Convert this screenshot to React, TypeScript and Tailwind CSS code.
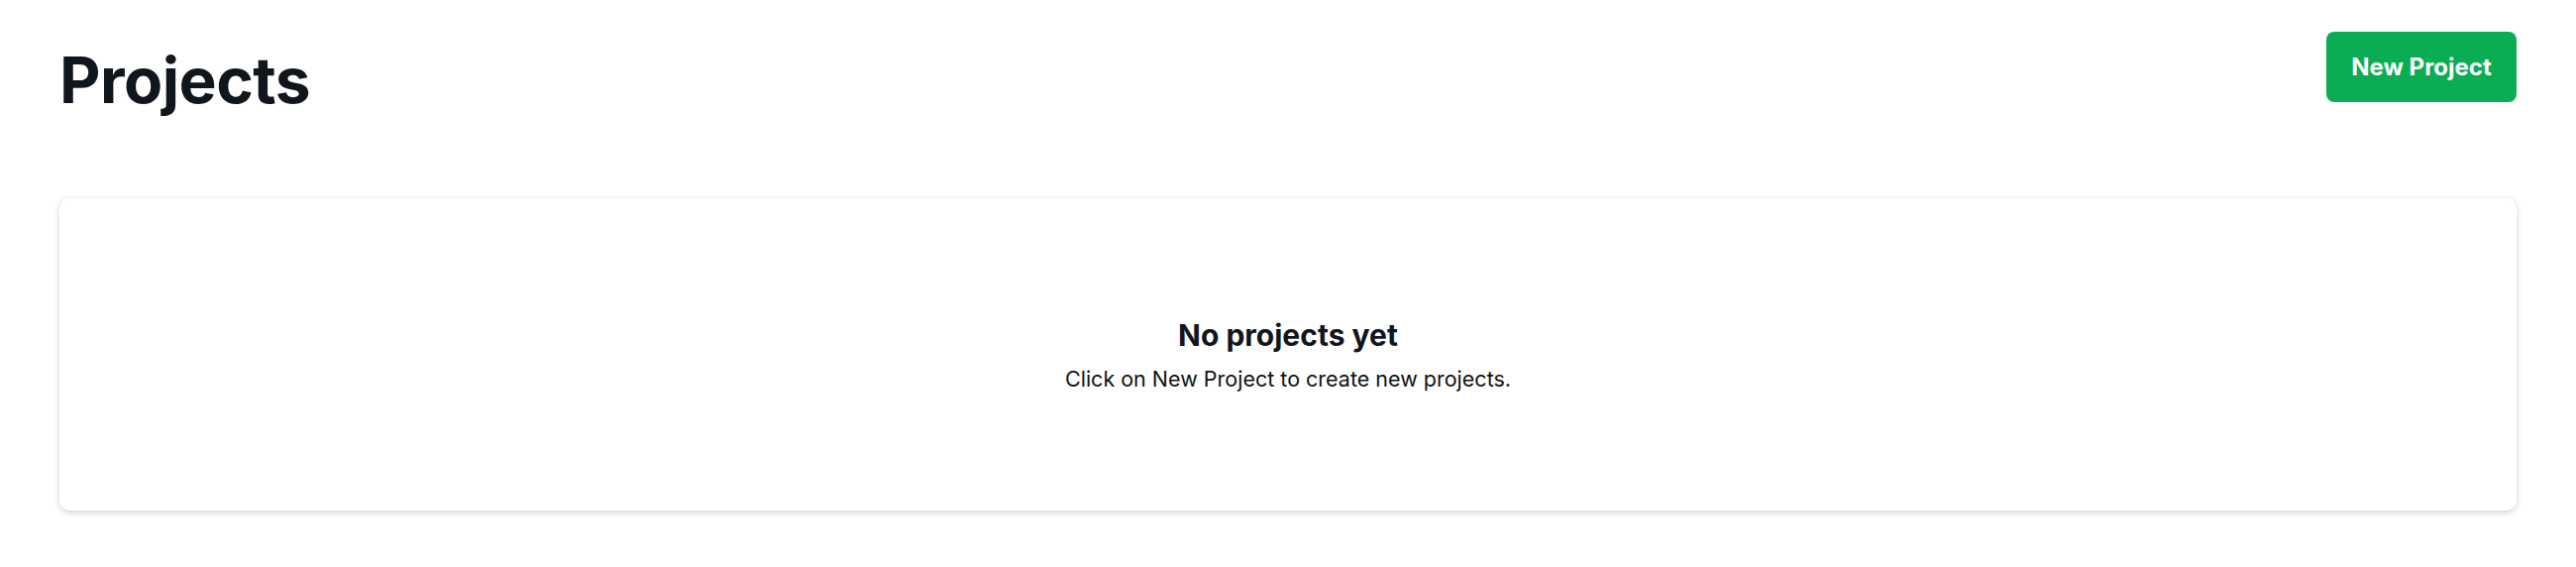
import React from 'react'

const App: React.FC = () => {
    return (
        <div className="min-h-screen w-full bg-white px-[60px] pt-[32px] font-['Inter',sans-serif] text-[#11151c]">
            <div className="flex items-start justify-between">
                <h1 className="mt-[17px] text-[64px] font-bold leading-[64px] tracking-[-0.5px]">Projects</h1>
                <button className="h-[71px] w-[192px] rounded-[8px] bg-[#0aad54] text-[24px] font-bold text-white">
                    New Project
                </button>
            </div>

            <div className="mt-[87px] flex h-[315px] flex-col items-center justify-center rounded-[10px] bg-white shadow-[0_2px_6px_rgba(0,0,0,0.18)]">
                <h3 className="text-[30px] font-bold leading-[36px]">No projects yet</h3>
                <p className="mt-[12px] text-[21.5px] leading-[28px] text-[#111]">Click on New Project to create new projects.</p>
            </div>
        </div>
    )
}

export default App
